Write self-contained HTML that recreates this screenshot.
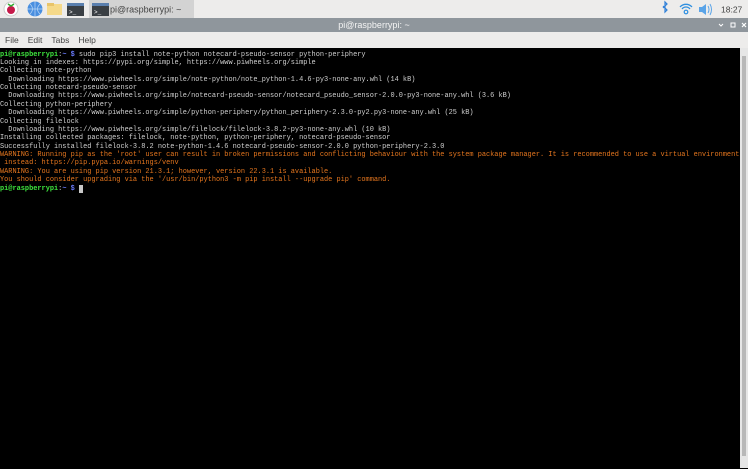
<!DOCTYPE html>
<html><head><style>
body{margin:0;width:748px;height:468px;overflow:hidden;background:#000;font-family:"Liberation Sans",sans-serif;position:relative}
#panel{position:absolute;left:0;top:0;width:748px;height:18px;background:#edeceb}
#title{position:absolute;left:0;top:18px;width:748px;height:14px;background:#8f969c;color:#f4f4f4;font-size:9px;text-align:center;line-height:14px}
#menu{position:absolute;left:0;top:32px;width:748px;height:16px;background:#edeceb;font-size:8.5px;color:#444;line-height:17px}
#menu span{margin-left:5px;margin-right:4px}
#term{position:absolute;left:0;top:50.5px;width:740px;height:418px;background:#000;font-family:"Liberation Mono",monospace;font-size:6.93px;line-height:8.37px;color:#d0d0d0;white-space:pre}
.g{color:#3ee63e;font-weight:bold}.b{color:#6b7cff;font-weight:bold}.o{color:#e5761e}
#bk{position:absolute;left:0;top:48px;width:740px;height:420px;background:#000}
#sb{position:absolute;left:740px;top:48px;width:8px;height:420px;background:#e6e6e6}
#sb div{position:absolute;left:2px;top:8px;width:4px;height:400px;background:#b8b8b8}
</style></head><body>
<div id="panel">
 <svg width="748" height="18" style="position:absolute;left:0;top:0">
  <circle cx="11" cy="9" r="7" fill="#fff" stroke="#ccc"/>
  <circle cx="11" cy="10" r="4" fill="#c51a4a"/><path d="M8 4 l3 2 l3 -2" stroke="#3a3" stroke-width="1.5" fill="none"/>
  <circle cx="35" cy="9" r="7.5" fill="#4a8fe0"/><path d="M27.5 9h15M35 1.5v15M30 4q5 5 0 10M40 4q-5 5 0 10" stroke="#bcd8f5" stroke-width=".7" fill="none"/>
  <rect x="47" y="4" width="15" height="11" fill="#f5d98a"/><rect x="47" y="3" width="7" height="3" fill="#e8c46a"/>
  <rect x="67" y="3" width="17" height="13" fill="#3a3f44"/><rect x="67" y="3" width="17" height="3" fill="#5a7fae"/><text x="69" y="14" font-size="6" fill="#fff" font-family="Liberation Mono">&gt;_</text>
  <rect x="89" y="0" width="105" height="18" fill="#d3d3d3"/>
  <rect x="92" y="3" width="17" height="13" fill="#3a3f44"/><rect x="92" y="3" width="17" height="3" fill="#5a7fae"/><text x="94" y="14" font-size="6" fill="#fff" font-family="Liberation Mono">&gt;_</text>
  <text x="110" y="12.5" font-size="9" fill="#444" font-family="Liberation Sans">pi@raspberrypi: ~</text>
  <path d="M663 6l4 4-2 2V2l2 2-4 4" stroke="#2e7fd8" stroke-width="1.2" fill="none"/>
  <path d="M680 7a8 8 0 0 1 12 0M682 9a5 5 0 0 1 8 0" stroke="#2e8fe0" stroke-width="1.3" fill="none"/><circle cx="686" cy="12" r="1.8" fill="none" stroke="#2e8fe0" stroke-width="1.2"/>
  <path d="M699 7h3l4-3v11l-4-3h-3z" fill="#5aa4e8"/><path d="M708 6q2 3.5 0 7M710 4q3 5.5 0 11" stroke="#5aa4e8" fill="none"/>
  <text x="721" y="12.5" font-size="8.5" fill="#444" font-family="Liberation Sans">18:27</text>
 </svg>
</div>
<div id="title">pi@raspberrypi: ~
 <svg width="40" height="14" style="position:absolute;right:0;top:0"><path d="M11 6l2 2 2-2" stroke="#fff" fill="none"/><rect x="23" y="5" width="4" height="4" stroke="#fff" fill="none"/><path d="M34 5l4 4M38 5l-4 4" stroke="#fff" stroke-width="1.2"/></svg>
</div>
<div id="menu"><span>File</span><span>Edit</span><span>Tabs</span><span>Help</span></div>
<div id="bk"></div>
<div id="term"><span class="g">pi@raspberrypi</span>:<span class="b">~ $</span> sudo pip3 install note-python notecard-pseudo-sensor python-periphery
Looking in indexes: https://pypi.org/simple, https://www.piwheels.org/simple
Collecting note-python
  Downloading https://www.piwheels.org/simple/note-python/note_python-1.4.6-py3-none-any.whl (14 kB)
Collecting notecard-pseudo-sensor
  Downloading https://www.piwheels.org/simple/notecard-pseudo-sensor/notecard_pseudo_sensor-2.0.0-py3-none-any.whl (3.6 kB)
Collecting python-periphery
  Downloading https://www.piwheels.org/simple/python-periphery/python_periphery-2.3.0-py2.py3-none-any.whl (25 kB)
Collecting filelock
  Downloading https://www.piwheels.org/simple/filelock/filelock-3.8.2-py3-none-any.whl (10 kB)
Installing collected packages: filelock, note-python, python-periphery, notecard-pseudo-sensor
Successfully installed filelock-3.8.2 note-python-1.4.6 notecard-pseudo-sensor-2.0.0 python-periphery-2.3.0
<span class="o">WARNING: Running pip as the 'root' user can result in broken permissions and conflicting behaviour with the system package manager. It is recommended to use a virtual environment
 instead: https://pip.pypa.io/warnings/venv
WARNING: You are using pip version 21.3.1; however, version 22.3.1 is available.
You should consider upgrading via the '/usr/bin/python3 -m pip install --upgrade pip' command.</span>
<span class="g">pi@raspberrypi</span>:<span class="b">~ $</span> <span style="background:#c8c8c8"> </span></div>
<div id="sb"><div></div></div>
</body></html>
